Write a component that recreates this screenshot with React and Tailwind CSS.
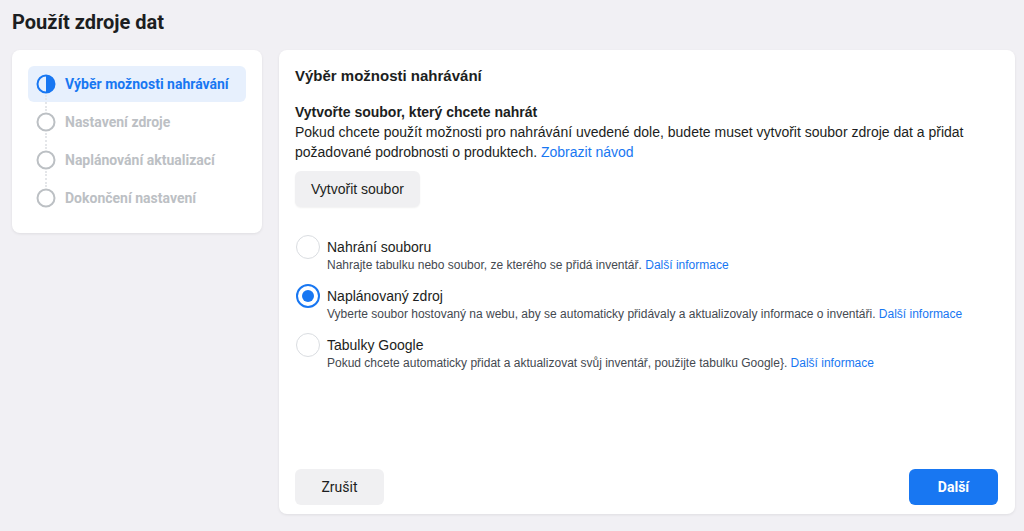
import React from "react";

const steps = [
  { id: 1, label: "Výběr možnosti nahrávání", active: true },
  { id: 2, label: "Nastavení zdroje" },
  { id: 3, label: "Naplánování aktualizací" },
  { id: 4, label: "Dokončení nastavení" },
];

const options = [
  {
    id: 1,
    title: "Nahrání souboru",
    text: "Nahrajte tabulku nebo soubor, ze kterého se přidá inventář.",
  },
  {
    id: 2,
    title: "Naplánovaný zdroj",
    text: "Vyberte soubor hostovaný na webu, aby se automaticky přidávaly a aktualizovaly informace o inventáři.",
    checked: true,
  },
  {
    id: 3,
    title: "Tabulky Google",
    text: "Pokud chcete automaticky přidat a aktualizovat svůj inventář, použijte tabulku Google}.",
  },
];

const StepIcon = ({ active }) =>
  active ? (
    <svg width="20" height="20" viewBox="0 0 20 20">
      <circle cx="10" cy="10" r="8.5" fill="none" stroke="#1877f2" strokeWidth="2" />
      <path d="M10 1.5 A8.5 8.5 0 0 1 10 18.5 Z" fill="#1877f2" />
    </svg>
  ) : (
    <svg width="20" height="20" viewBox="0 0 20 20">
      <circle cx="10" cy="10" r="8.5" fill="none" stroke="#bcc0c4" strokeWidth="2" />
    </svg>
  );

const Radio = ({ checked }) =>
  checked ? (
    <span className="w-6 h-6 rounded-full border-2 border-[#1877f2] bg-white flex items-center justify-center">
      <span className="block w-3 h-3 rounded-full bg-[#1877f2]" />
    </span>
  ) : (
    <span className="block w-6 h-6 rounded-full border border-[#dadde1] bg-white" />
  );

const App = () => {
  return (
    <div className="h-[531px] bg-[#f1f0f4] pl-3 pr-[9px] pt-[10px] overflow-hidden font-['Roboto',sans-serif]">
      <h1 className="text-[20px] leading-6 font-bold text-[#1c1e21] mb-4">Použít zdroje dat</h1>

      <div className="flex items-start gap-[17px]">
        {/* steps */}
        <div className="w-[250px] bg-white rounded-lg shadow-[0_1px_3px_rgba(0,0,0,0.08)] p-4 pb-[17px] flex flex-col gap-[2px]">
          {steps.map((s, i) => (
            <div
              key={s.id}
              className={
                s.active
                  ? "relative h-9 rounded-md bg-[#e7f0fd] pl-2 flex items-center gap-[9px]"
                  : "relative h-9 rounded-md pl-2 flex items-center gap-[9px]"
              }
            >
              {i > 0 && (
                <span className="absolute left-[17px] -top-[9px] h-[16px] border-l-2 border-dotted border-[#e4e6e9]" />
              )}
              <StepIcon active={s.active} />
              <span
                className={
                  s.active
                    ? "text-[14px] font-bold text-[#1877f2]"
                    : "text-[14px] font-bold text-[#bcc0c4]"
                }
              >
                {s.label}
              </span>
            </div>
          ))}
        </div>

        {/* main card */}
        <div className="flex-1 h-[464px] bg-white rounded-lg shadow-[0_1px_3px_rgba(0,0,0,0.08)] px-4 pt-4 pb-[9px] flex flex-col font-['Liberation_Sans',Arial,sans-serif] text-[#1c1e21]">
          <h2 className="text-[15px] leading-5 font-bold">Výběr možnosti nahrávání</h2>

          <div className="mt-4 text-[14px] leading-5">
            <div className="font-bold">Vytvořte soubor, který chcete nahrát</div>
            <p>
              Pokud chcete použít možnosti pro nahrávání uvedené dole, budete muset vytvořit soubor zdroje dat a přidat
              požadované podrobnosti o produktech. <span className="text-[#1877f2]">Zobrazit návod</span>
            </p>
          </div>

          <button className="mt-[9px] self-start h-9 px-4 rounded-md bg-[#f0f0f2] text-[14px] text-[#1c1e21] shadow-[0_1px_2px_rgba(0,0,0,0.06)]">
            Vytvořit soubor
          </button>

          <div className="mt-[31px] flex flex-col gap-[14px]">
            {options.map((o) => (
              <div key={o.id} className="flex gap-[7px] pl-px">
                <div className="-mt-[3px] shrink-0">
                  <Radio checked={o.checked} />
                </div>
                <div>
                  <div className="text-[14px] leading-[18px]">{o.title}</div>
                  <div className="mt-px text-[12px] leading-4 text-[#444950]">
                    {o.text} <span className="text-[#1877f2]">Další informace</span>
                  </div>
                </div>
              </div>
            ))}
          </div>

          <div className="mt-auto flex justify-between font-['Roboto',sans-serif]">
            <button className="w-[89px] h-9 rounded-md bg-[#f0f0f2] text-[14px] font-normal text-[#1c1e21]">
              Zrušit
            </button>
            <button className="w-[89px] h-9 mr-px rounded-md bg-[#1877f2] text-[14px] font-bold text-white">
              Další
            </button>
          </div>
        </div>
      </div>
    </div>
  );
};

export default App;
